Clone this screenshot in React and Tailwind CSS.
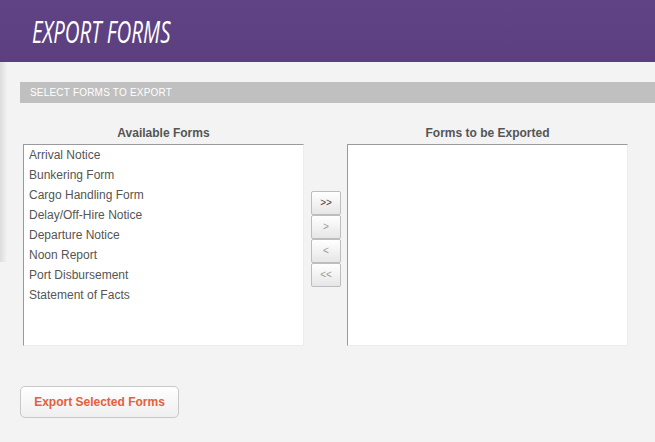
import React from "react";

const forms = [
  "Arrival Notice",
  "Bunkering Form",
  "Cargo Handling Form",
  "Delay/Off-Hire Notice",
  "Departure Notice",
  "Noon Report",
  "Port Disbursement",
  "Statement of Facts",
];

function MoveButton({ label, active }) {
  return (
    <button
      className={
        "h-[24px] w-[30px] border border-[#bdbdbd] rounded-[2px] bg-gradient-to-b from-white to-[#e6e6e6] text-[10px] leading-none flex items-center justify-center font-['Liberation_Sans',sans-serif] " +
        (active ? "text-[#444]" : "text-[#999]")
      }
    >
      {label}
    </button>
  );
}

export default function App() {
  return (
    <div className="relative w-[655px] h-[442px] overflow-hidden bg-[#f3f3f3] font-['Liberation_Sans',Arial,sans-serif]">
      <header className="h-[62px] bg-gradient-to-b from-[#5f4384] to-[#5b3f7f] pl-[32px] flex items-center">
        <h1 className="text-white italic font-normal text-[31px] leading-none tracking-[0px] font-['Open_Sans',sans-serif] origin-left scale-x-[0.66] whitespace-nowrap mt-[1px]">
          EXPORT FORMS
        </h1>
      </header>

      <div className="pointer-events-none absolute left-0 top-[62px] h-[200px] w-[7px] bg-gradient-to-r from-[#dcdcdc] to-transparent" />

      <main className="pl-[20px] pt-[20px]">
        <div className="h-[21px] bg-[#c0c0c0] pl-[10px] flex items-center text-white text-[10px] tracking-[0.2px] uppercase">
          Select Forms to Export
        </div>

        <div className="mt-[22px] pl-[3px] flex items-start">
          <div className="w-[281px]">
            <div className="h-[16px] leading-[16px] text-center text-[12px] font-bold text-[#555]">
              Available Forms
            </div>
            <div className="mt-[3px] h-[202px] bg-white border-t border-l border-t-[#9a9a9a] border-l-[#9a9a9a] border-r border-b border-r-[#ececec] border-b-[#ececec] pl-[5px]">
              {forms.map((f) => (
                <div key={f} className="text-[12px] leading-[20px] text-[#555] whitespace-nowrap">
                  {f}
                </div>
              ))}
            </div>
          </div>

          <div className="ml-[7px] mt-[66px] flex flex-col">
            <MoveButton label=">>" active />
            <MoveButton label=">" />
            <MoveButton label="<" />
            <MoveButton label="<<" />
          </div>

          <div className="ml-[6px] w-[281px]">
            <div className="h-[16px] leading-[16px] text-center text-[12px] font-bold text-[#555]">
              Forms to be Exported
            </div>
            <div className="mt-[3px] h-[202px] bg-white border-t border-l border-t-[#9a9a9a] border-l-[#9a9a9a] border-r border-b border-r-[#ececec] border-b-[#ececec]" />
          </div>
        </div>

        <button className="mt-[40px] h-[32px] w-[159px] rounded-[5px] border border-[#c8c8c8] bg-gradient-to-b from-white to-[#efefef] text-[12px] font-bold text-[#e4603c] flex items-center justify-center">
          Export Selected Forms
        </button>
      </main>
    </div>
  );
}
